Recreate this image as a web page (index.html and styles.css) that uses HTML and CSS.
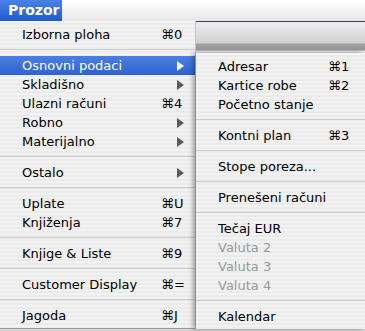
FILE: index.html
```html
<!DOCTYPE html>
<html lang="hr">
<head>
  <meta charset="UTF-8" />
  <title>Prozor</title>
  <link rel="stylesheet" href="styles.css">
</head>
<body>
  <!-- Traka izbornika -->
  <header class="menubar">
    <span class="menu-title active">Prozor</span>
  </header>

  <div class="screen">
    <!-- Glavni izbornik -->
    <ul class="menu main-menu">
      <li class="item"><span>Izborna ploha</span><span class="key">⌘0</span></li>
      <li class="sep"></li>
      <li class="item selected"><span>Osnovni podaci</span><span class="arrow"></span></li>
      <li class="item"><span>Skladišno</span><span class="arrow"></span></li>
      <li class="item"><span>Ulazni računi</span><span class="key">⌘4</span></li>
      <li class="item"><span>Robno</span><span class="arrow"></span></li>
      <li class="item"><span>Materijalno</span><span class="arrow"></span></li>
      <li class="sep"></li>
      <li class="item"><span>Ostalo</span><span class="arrow"></span></li>
      <li class="sep"></li>
      <li class="item"><span>Uplate</span><span class="key">⌘U</span></li>
      <li class="item"><span>Knjiženja</span><span class="key">⌘7</span></li>
      <li class="sep"></li>
      <li class="item"><span>Knjige &amp; Liste</span><span class="key">⌘9</span></li>
      <li class="sep"></li>
      <li class="item"><span>Customer Display</span><span class="key">⌘=</span></li>
      <li class="sep"></li>
      <li class="item"><span>Jagoda</span><span class="key">⌘J</span></li>
    </ul>

    <div class="side">
      <!-- alatna traka prozora ispod izbornika -->
      <div class="toolbar"></div>

      <!-- Podizbornik Osnovni podaci -->
      <ul class="menu sub-menu">
        <li class="item"><span>Adresar</span><span class="key">⌘1</span></li>
        <li class="item"><span>Kartice robe</span><span class="key">⌘2</span></li>
        <li class="item"><span>Početno stanje</span></li>
        <li class="sep"></li>
        <li class="item"><span>Kontni plan</span><span class="key">⌘3</span></li>
        <li class="sep"></li>
        <li class="item"><span>Stope poreza...</span></li>
        <li class="sep"></li>
        <li class="item"><span>Prenešeni računi</span></li>
        <li class="sep"></li>
        <li class="item"><span>Tečaj EUR</span></li>
        <li class="item disabled"><span>Valuta 2</span></li>
        <li class="item disabled"><span>Valuta 3</span></li>
        <li class="item disabled"><span>Valuta 4</span></li>
        <li class="sep"></li>
        <li class="item"><span>Kalendar</span></li>
      </ul>
    </div>
  </div>
</body>
</html>
```

FILE: styles.css
```css
/* General Styles */
body {
  margin: 0;
  width: 365px;
  height: 331px;
  overflow: hidden;
  background-color: #d4d4d4;
  font-family: 'DejaVu Sans', 'Liberation Sans', sans-serif;
  font-size: 13px;
  color: #000;
}

/* Menu bar */
.menubar {
  height: 21px;
  display: flex;
  background: linear-gradient(#fefefe, #f2f2f2 60%, #e6e6e6);
}

.menu-title {
  padding: 0 8px;
  line-height: 21px;
  font-weight: 700;
  font-size: 14px;
}

.menu-title.active {
  width: 46px;
  color: white;
  background: linear-gradient(#4a82e6, #1d5ad2);
}

/* Layout under the bar */
.screen {
  display: flex;
  height: 308px;
}

.side {
  flex: 1;
  display: flex;
  flex-direction: column;
  position: relative;
  z-index: 2;
}

.toolbar {
  height: 32px;
  border-top: 1px solid #34425e;
  box-sizing: border-box;
  background: linear-gradient(#eeeeee 0, #d0d0d0 21px, #a0a0a0 22px, #989898 28px, #e4e4e4 29px, #e4e4e4 32px);
}

/* Menu Styles */
.menu {
  list-style: none;
  margin: 0;
  padding: 4px 0 0;
  box-sizing: border-box;
  background: repeating-linear-gradient(#f3f3f3 0, #f3f3f3 2px, #ebebeb 2px, #ebebeb 4px);
}

.main-menu {
  width: 196px;
  border-right: 1px solid #c4c4c4;
  border-bottom: 1px solid #9c9c9c;
}

.sub-menu {
  flex: 1;
  box-shadow: -3px 0 5px rgba(0, 0, 0, 0.35);
}

.item {
  height: 19px;
  line-height: 19px;
  display: flex;
  align-items: center;
  padding-left: 22px;
}

.item span:first-child {
  flex: 1;
}

.main-menu .key {
  width: 34px;
}

.sub-menu .key {
  width: 37px;
}

.item.selected {
  color: white;
  background: linear-gradient(#4b7fe0, #2f63d0);
}

.item.disabled {
  color: #9a9a9a;
}

.arrow {
  width: 0;
  height: 0;
  margin-right: 11px;
  border-top: 5px solid transparent;
  border-bottom: 5px solid transparent;
  border-left: 7px solid #5a5a5a;
}

.item.selected .arrow {
  border-left-color: white;
}

.sep {
  height: 12px;
  background: linear-gradient(transparent 5px, #cbcbcb 5px, #cbcbcb 6px, transparent 6px);
}
```
